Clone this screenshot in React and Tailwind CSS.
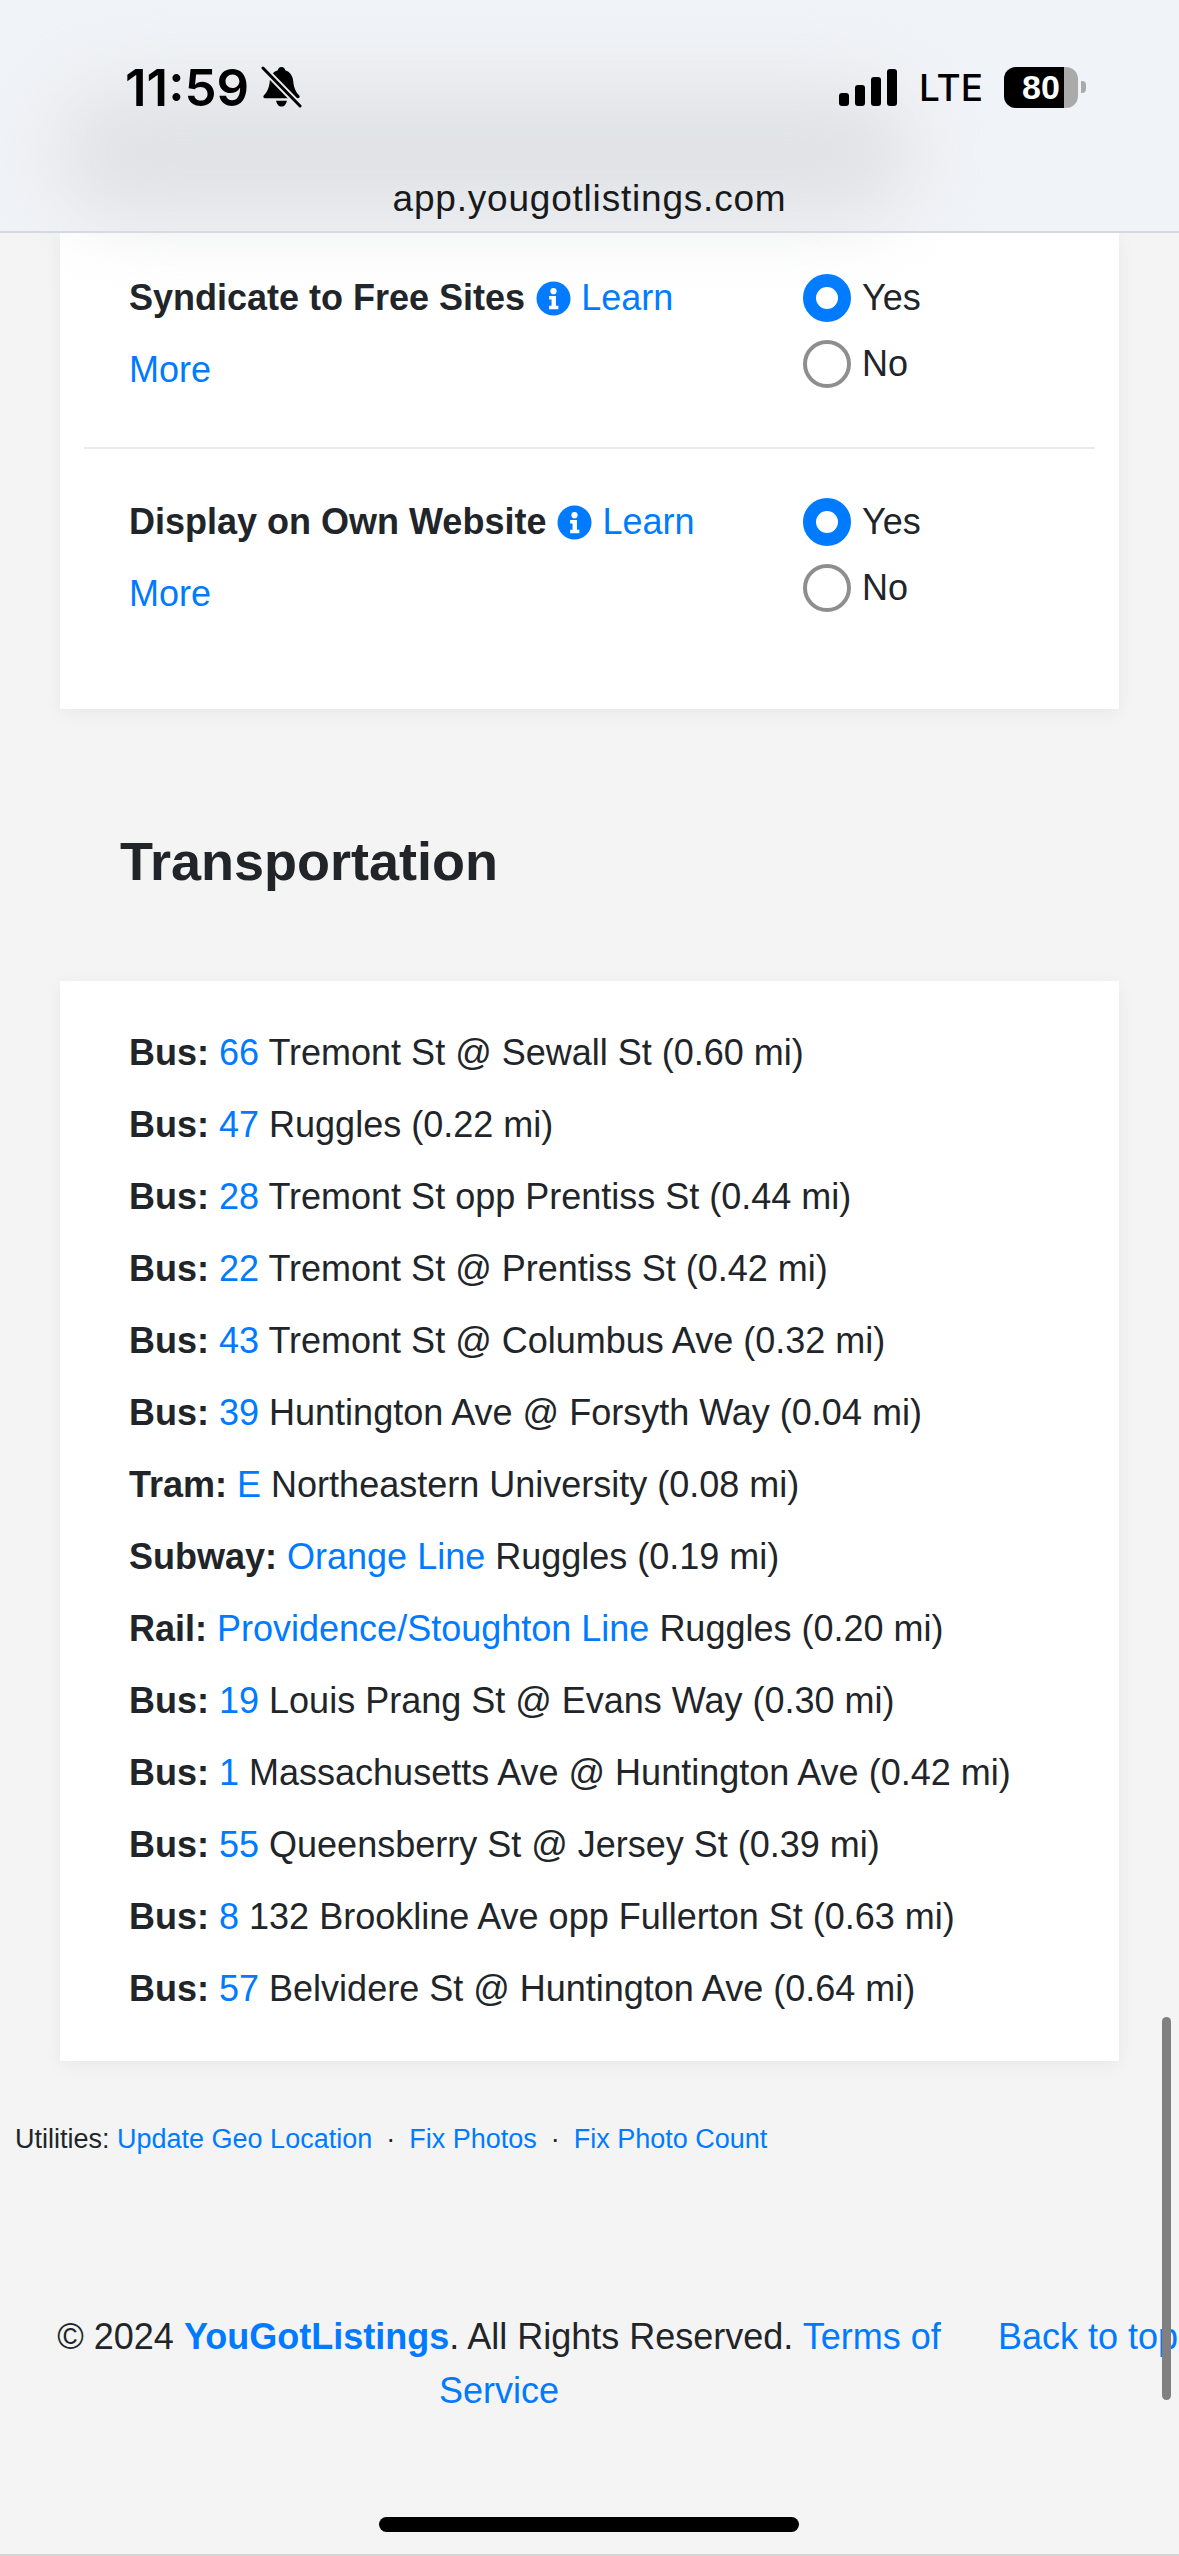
import React from 'react';

const transit = [
  ['Bus:', '66', 'Tremont St @ Sewall St (0.60 mi)'],
  ['Bus:', '47', 'Ruggles (0.22 mi)'],
  ['Bus:', '28', 'Tremont St opp Prentiss St (0.44 mi)'],
  ['Bus:', '22', 'Tremont St @ Prentiss St (0.42 mi)'],
  ['Bus:', '43', 'Tremont St @ Columbus Ave (0.32 mi)'],
  ['Bus:', '39', 'Huntington Ave @ Forsyth Way (0.04 mi)'],
  ['Tram:', 'E', 'Northeastern University (0.08 mi)'],
  ['Subway:', 'Orange Line', 'Ruggles (0.19 mi)'],
  ['Rail:', 'Providence/Stoughton Line', 'Ruggles (0.20 mi)'],
  ['Bus:', '19', 'Louis Prang St @ Evans Way (0.30 mi)'],
  ['Bus:', '1', 'Massachusetts Ave @ Huntington Ave (0.42 mi)'],
  ['Bus:', '55', 'Queensberry St @ Jersey St (0.39 mi)'],
  ['Bus:', '8', '132 Brookline Ave opp Fullerton St (0.63 mi)'],
  ['Bus:', '57', 'Belvidere St @ Huntington Ave (0.64 mi)'],
];

const InfoIcon = () => (
  <svg viewBox="0 0 36 36" className="inline-block w-[35px] h-[35px] align-[-6px] ml-[1px]">
    <circle cx="18" cy="18" r="17.5" fill="#007bff" />
    <circle cx="18" cy="10.500" r="3.200" fill="#fff" />
    <path d="M13.500 15.500h7v10h2.500v3.500h-9.500v-3.500h2.500v-6.500h-2.500z" fill="#fff" />
  </svg>
);

const BellOff = () => (
  <svg viewBox="0 0 42 44" className="w-[41px] h-[43px]">
    <path d="M21 1c2.200 0 3.600 1.500 3.800 3.300 5 1.600 7.600 5.500 8.200 11 .6 6 2 10.500 6 14.700 1.200 1.300.6 3-1.200 3H4.200C2.400 33 1.800 31.300 3 30c4-4.200 5.400-8.700 6-14.700.6-5.500 3.200-9.400 8.200-11C17.400 2.500 18.800 1 21 1z" fill="#000" />
    <path d="M15.500 35.500h11c-.5 3.500-2.800 6-5.500 6s-5-2.500-5.500-6z" fill="#000" />
    <path d="M2 2 40 41" stroke="#e9ebee" strokeWidth="7" />
    <path d="M2 2 40 41" stroke="#000" strokeWidth="3" strokeLinecap="round" />
  </svg>
);

const Signal = () => (
  <div className="flex items-end gap-[6px] h-[37px]">
    <div className="w-[10px] h-[13px] rounded-[3px] bg-black" />
    <div className="w-[10px] h-[21px] rounded-[3px] bg-black" />
    <div className="w-[10px] h-[29px] rounded-[3px] bg-black" />
    <div className="w-[10px] h-[37px] rounded-[3px] bg-black" />
  </div>
);

const Battery = () => (
  <div className="flex items-center">
    <div className="flex w-[74px] h-[41px] rounded-[12px] overflow-hidden bg-[#aaaaaa]">
      <div className="flex items-center justify-center w-[60px] bg-black text-white text-[34px] font-semibold leading-none pl-[14px]">
        80
      </div>
    </div>
    <div className="w-[5px] h-[12px] ml-[3px] rounded-r-[4px] bg-[#aaaaaa]" />
  </div>
);

const Radio = ({ checked, label }) => (
  <div className="flex items-center h-[48px] mb-[18px]">
    {checked ? (
      <div className="w-[48px] h-[48px] rounded-full border-[13px] border-[#007bff] bg-white" />
    ) : (
      <div className="w-[48px] h-[48px] rounded-full border-[4px] border-[#8e8e8e] bg-white" />
    )}
    <span className="ml-[11px] text-[36px] leading-none text-[#212529]">{label}</span>
  </div>
);

const ListingOption = ({ title }) => (
  <div className="flex">
    <div className="w-[674px] pr-[60px] text-[36px] leading-[72px] text-[#212529]">
      <b className="font-bold">{title}</b> <InfoIcon /> <a className="text-[#007bff]">Learn More</a>
    </div>
    <div className="pt-[12px]">
      <Radio checked label="Yes" />
      <Radio label="No" />
    </div>
  </div>
);

export default function App() {
  return (
    <div
      className="relative w-[1179px] h-[2556px] overflow-hidden bg-[#f4f4f4]"
      style={{ fontFamily: '"Liberation Sans", Arial, sans-serif' }}
    >
      <header className="relative z-10 h-[233px] bg-[#f0f3f7] border-b-2 border-[#d6d8e0]">
        <div className="absolute left-[60px] top-[90px] w-[850px] h-[125px] rounded-[60px] bg-[#e0e2e4] blur-[36px]" />
        <div className="relative flex items-center justify-between h-[84px] pt-[45px] pl-[125px] pr-[93px] box-content">
          <div className="flex items-center gap-[12px]">
            <span className="text-[51px] font-semibold leading-none text-black" style={{ fontFamily: 'Inter, sans-serif' }}>11:59</span>
            <BellOff />
          </div>
          <div className="flex items-center">
            <Signal />
            <span className="ml-[22px] mr-[21px] text-[37px] font-medium leading-none text-black" style={{ fontFamily: 'Inter, sans-serif' }}>LTE</span>
            <Battery />
          </div>
        </div>
        <div className="relative mt-[50px] text-center text-[37px] leading-[40px] tracking-[0.8px] text-[#17191b]">
          app.yougotlistings.com
        </div>
      </header>

      <section className="mx-[60px] h-[476px] bg-white shadow-[0_4px_16px_rgba(0,0,0,0.05)] px-[24px]">
        <div className="px-[45px] pt-[29px] h-[214px]">
          <ListingOption title="Syndicate to Free Sites" />
        </div>
        <div className="h-[2px] bg-[#eaeaea]" />
        <div className="px-[45px] pt-[37px]">
          <ListingOption title="Display on Own Website" />
        </div>
      </section>

      <h2 className="ml-[120px] mt-[120px] text-[54px] font-bold leading-[64px] text-[#212529]">Transportation</h2>

      <section className="mx-[60px] mt-[88px] h-[1080px] bg-white shadow-[0_4px_16px_rgba(0,0,0,0.05)] px-[69px] pt-[36px]">
        {transit.map(([kind, line, stop], i) => (
          <div key={i} className="h-[72px] text-[36px] leading-[72px] text-[#212529] whitespace-nowrap">
            <b className="font-bold">{kind}</b> <a className="text-[#007bff]">{line}</a> {stop}
          </div>
        ))}
      </section>

      <div className="mt-[60px] ml-[15px] text-[27px] leading-[36px] text-[#212529] whitespace-nowrap">
        Utilities: <a className="text-[#007bff]">Update Geo Location</a>
        <span className="mx-[14px]">·</span>
        <a className="text-[#007bff]">Fix Photos</a>
        <span className="mx-[14px]">·</span>
        <a className="text-[#007bff]">Fix Photo Count</a>
      </div>

      <div className="flex mt-[153px] text-[36px] leading-[54px] text-[#212529]">
        <p className="w-[998px] shrink-0 px-[40px] text-center">
          © 2024 <a className="font-bold text-[#007bff]">YouGotListings</a>. All Rights Reserved. <a className="text-[#007bff]">Terms of Service</a>
        </p>
        <a className="text-[#007bff] whitespace-nowrap">Back to top</a>
      </div>

      {/* overlays: scroll thumb and home bar */}
      <div className="absolute left-[1162px] top-[2017px] w-[9px] h-[383px] rounded-full bg-[#808080]" />
      <div className="absolute left-[379px] top-[2517px] w-[420px] h-[15px] rounded-full bg-black" />
      <div className="absolute left-0 bottom-0 w-full h-[2px] bg-[#d4d4d4]" />
    </div>
  );
}
